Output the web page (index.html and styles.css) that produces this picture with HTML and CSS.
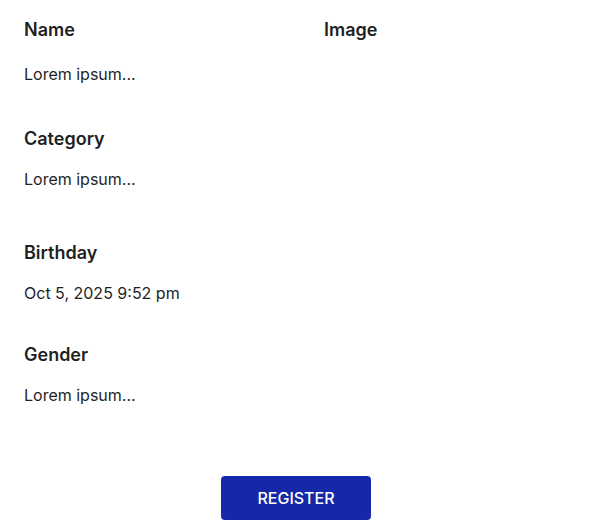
FILE: index.html
```html
<!DOCTYPE html>
<html lang="en">
<head>
<meta charset="utf-8">
<title>Register</title>
<link rel="stylesheet" href="styles.css">
</head>
<body>
<div class="page">
  <div class="row">
    <div class="field field-name">
      <div class="label label-name">Name</div>
      <div class="value">Lorem ipsum...</div>
    </div>
    <div class="field">
      <div class="label">Image</div>
    </div>
  </div>
  <div class="field field-category">
    <div class="label">Category</div>
    <div class="value">Lorem ipsum...</div>
  </div>
  <div class="field field-birthday">
    <div class="label">Birthday</div>
    <div class="value">Oct 5, 2025 9:52 pm</div>
  </div>
  <div class="field field-gender">
    <div class="label">Gender</div>
    <div class="value">Lorem ipsum...</div>
  </div>
  <div class="actions">
    <button class="btn" type="button">REGISTER</button>
  </div>
</div>
</body>
</html>
```
FILE: styles.css
```css
html, body {
  margin: 0;
  padding: 0;
  background: #ffffff;
}
body {
  font-family: Inter, "Liberation Sans", sans-serif;
  color: #1f1f1f;
}
.page {
  width: 544px;
  padding: 18px 0 0 24px;
}
.row {
  display: grid;
  grid-template-columns: 300px 1fr;
}
.label {
  font-size: 18px;
  font-weight: 600;
  line-height: 24px;
  margin-bottom: 16px;
}
.label-name {
  margin-bottom: 20px;
}
.value {
  font-size: 16px;
  line-height: 24px;
}
.field-category {
  margin-top: 41px;
}
.field-birthday {
  margin-top: 50px;
}
.field-gender {
  margin-top: 38px;
}
.actions {
  display: flex;
  justify-content: center;
  margin-top: 69px;
}
.btn {
  width: 150px;
  height: 44px;
  border: none;
  border-radius: 4px;
  background: #1428a8;
  color: #ffffff;
  font-family: Inter, "Liberation Sans", sans-serif;
  font-size: 16px;
  font-weight: 500;
}
```
